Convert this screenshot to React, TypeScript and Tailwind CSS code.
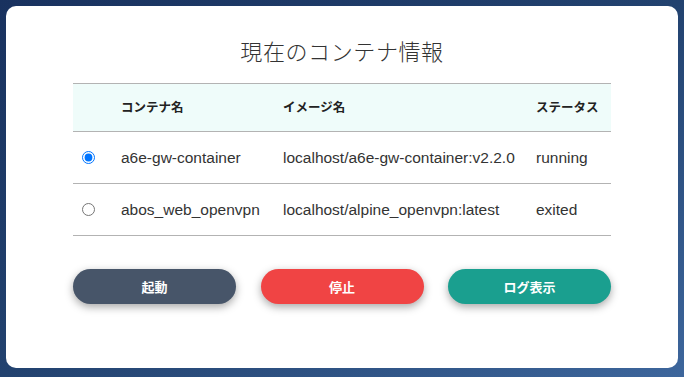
import React, { useState } from "react";

type Container = {
  name: string;
  image: string;
  status: string;
};

const CONTAINERS: Container[] = [
  { name: "a6e-gw-container", image: "localhost/a6e-gw-container:v2.2.0", status: "running" },
  { name: "abos_web_openvpn", image: "localhost/alpine_openvpn:latest", status: "exited" },
];

const jp = { fontFamily: '"Noto Sans CJK JP", sans-serif' };
const body = { fontFamily: '"Liberation Sans", "Noto Sans CJK JP", sans-serif' };

export default function App() {
  const [selected, setSelected] = useState(0);

  return (
    <div className="h-[377px] w-[684px] bg-gradient-to-br from-[#19325f] via-[#22426f] to-[#3d669c] px-[6px] pt-[6px] pb-[9px]">
      <div className="flex h-full flex-col rounded-[10px] bg-white px-[67px] pt-[30px]">
        <h1 className="text-center text-[22px] leading-[28px] font-light tracking-[0.6px] text-[#333]" style={jp}>
          現在のコンテナ情報
        </h1>

        <div className="mt-[19px] border-t border-[#b3b3b3]">
          {/* header */}
          <div
            className="grid h-[48px] grid-cols-[48px_162px_253px_1fr] items-center border-b border-[#b3b3b3] bg-[#effcfa] text-[12.5px] font-bold text-[#222]"
            style={jp}
          >
            <div />
            <div>コンテナ名</div>
            <div>イメージ名</div>
            <div>ステータス</div>
          </div>

          {CONTAINERS.map((c, i) => (
            <div
              key={c.name}
              className="grid h-[52px] grid-cols-[48px_162px_253px_1fr] items-center border-b border-[#b3b3b3] text-[15.5px] text-[#333]"
              style={body}
            >
              <div className="flex pl-[9px]">
                <input
                  type="radio"
                  name="container"
                  checked={selected === i}
                  onChange={() => setSelected(i)}
                  className="m-0 h-[13px] w-[13px]"
                />
              </div>
              <div>{c.name}</div>
              <div>{c.image}</div>
              <div>{c.status}</div>
            </div>
          ))}
        </div>

        <div className="mt-[33px] flex justify-between">
          <button className="h-[35px] w-[163px] rounded-full bg-[#475569] text-[13px] font-bold text-white shadow-[0_3px_8px_rgba(0,0,0,0.35)]" style={jp}>
            起動
          </button>
          <button className="h-[35px] w-[163px] rounded-full bg-[#f04444] text-[13px] font-bold text-white shadow-[0_3px_8px_rgba(0,0,0,0.35)]" style={jp}>
            停止
          </button>
          <button className="h-[35px] w-[163px] rounded-full bg-[#1a9f8f] text-[13px] font-bold text-white shadow-[0_3px_8px_rgba(0,0,0,0.35)]" style={jp}>
            ログ表示
          </button>
        </div>
      </div>
    </div>
  );
}
